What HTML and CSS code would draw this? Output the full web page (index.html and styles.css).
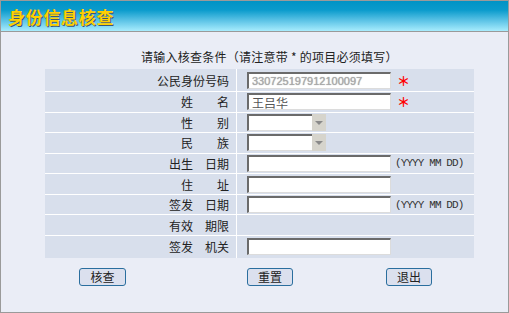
FILE: index.html
```html
<!DOCTYPE html>
<html lang="zh-CN">
<head>
<meta charset="UTF-8" />
<title>身份信息核查</title>
<link rel="stylesheet" href="styles.css">
</head>
<body>
    <div class="page">
        <div class="header">
            <h1>身份信息核查</h1>
        </div>

        <p class="notice">请输入核查条件（请注意带 * 的项目必须填写）</p>

        <form class="query-form">
            <label class="cell-label" for="id-no">公民身份号码</label>
            <div class="cell-field">
                <input type="text" id="id-no" class="txt txt-id" value="330725197912100097" />
                <span class="required">＊</span>
            </div>

            <label class="cell-label" for="name">姓　　名</label>
            <div class="cell-field">
                <input type="text" id="name" class="txt txt-name" value="王吕华" />
                <span class="required">＊</span>
            </div>

            <label class="cell-label" for="sex">性　　别</label>
            <div class="cell-field">
                <span class="select-wrap"><select id="sex"><option></option></select></span>
            </div>

            <label class="cell-label" for="nation">民　　族</label>
            <div class="cell-field">
                <span class="select-wrap"><select id="nation"><option></option></select></span>
            </div>

            <label class="cell-label" for="birth">出生　日期</label>
            <div class="cell-field">
                <input type="text" id="birth" class="txt" />
                <span class="hint">(YYYY MM DD)</span>
            </div>

            <label class="cell-label" for="addr">住　　址</label>
            <div class="cell-field">
                <input type="text" id="addr" class="txt" />
            </div>

            <label class="cell-label" for="issue-date">签发　日期</label>
            <div class="cell-field">
                <input type="text" id="issue-date" class="txt" />
                <span class="hint">(YYYY MM DD)</span>
            </div>

            <label class="cell-label">有效　期限</label>
            <div class="cell-field"></div>

            <label class="cell-label" for="office">签发　机关</label>
            <div class="cell-field">
                <input type="text" id="office" class="txt" />
            </div>
        </form>

        <div class="actions">
            <button type="button" class="btn btn-check">核查</button>
            <button type="button" class="btn btn-reset">重置</button>
            <button type="button" class="btn btn-exit">退出</button>
        </div>
    </div>
</body>
</html>
```

FILE: styles.css
```css
body {
    margin: 0;
    font-family: "Noto Sans CJK SC", "Liberation Sans", sans-serif;
    font-size: 12px;
    color: #222;
}

.page {
    width: 509px;
    height: 313px;
    box-sizing: border-box;
    border: 1px solid #9a9a9a;
    background: #eaedf6;
}

.header {
    height: 30px;
    border-bottom: 1px solid #9a9a9a;
    background: linear-gradient(#0093c5 0%, #0a9bcc 30%, #5cc3e6 65%, #a8ecfd 100%);
    display: flex;
    align-items: center;
    padding-left: 7px;
}

.header h1 {
    margin: 0;
    font-size: 17px;
    font-weight: bold;
    color: #ffd000;
    text-shadow: 1px 1px 0 #3b5876;
    letter-spacing: 0.7px;
}

.notice {
    margin: 0;
    height: 37px;
    line-height: 14px;
    padding-top: 18px;
    box-sizing: border-box;
    padding-left: 140px;
    color: #222;
    white-space: nowrap;
    letter-spacing: 0.25px;
}

.query-form {
    margin: 0 0 0 44px;
    width: 429px;
    display: grid;
    grid-template-columns: 191px 237px;
    grid-template-rows: 22px repeat(7, 19.57px) 22px;
    gap: 1px;
    background: #fff;
}

.cell-label,
.cell-field {
    background: #d8dfec;
    display: flex;
    align-items: center;
}

.cell-label {
    justify-content: flex-end;
    padding-right: 7px;
    color: #222;
    white-space: pre;
}

.cell-field {
    padding-left: 10px;
}

.txt {
    width: 144px;
    height: 17px;
    box-sizing: border-box;
    margin: 0;
    padding: 0 3px;
    border-style: solid;
    border-width: 2px 1px 1px 2px;
    border-color: #6b6b6b #dcdcdc #dcdcdc #6b6b6b;
    background: #fff;
    font-family: "Noto Sans CJK SC", "Liberation Sans", sans-serif;
    font-size: 12px;
    outline: none;
}

.txt-id {
    font-family: "Liberation Sans", sans-serif;
    font-size: 11px;
    color: #a9a9a9;
    text-shadow: 0 0 1px #999;
}

.txt-name {
    color: #555;
}

.required {
    color: #ff0000;
    font-size: 13px;
    font-weight: bold;
    margin-left: 6px;
    line-height: 1;
}

.hint {
    font-family: "Liberation Mono", monospace;
    font-size: 11px;
    letter-spacing: -0.9px;
    color: #333;
    margin-left: 4px;
}

.select-wrap {
    position: relative;
    display: inline-block;
    width: 79px;
    height: 17px;
}

.select-wrap select {
    appearance: none;
    -webkit-appearance: none;
    width: 79px;
    height: 17px;
    box-sizing: border-box;
    margin: 0;
    border-style: solid;
    border-width: 2px 1px 1px 2px;
    border-color: #6b6b6b #dcdcdc #dcdcdc #6b6b6b;
    background: #fff;
    border-radius: 0;
}

/* 下拉按钮 */
.select-wrap::after {
    content: "";
    position: absolute;
    right: 0;
    top: 0;
    width: 14px;
    height: 17px;
    background: #d6d4cc;
}

.select-wrap::before {
    content: "";
    position: absolute;
    right: 3px;
    top: 7px;
    border-left: 4px solid transparent;
    border-right: 4px solid transparent;
    border-top: 4px solid #8a8a8a;
    z-index: 1;
}

.actions {
    display: flex;
    padding-top: 10px;
}

.btn {
    height: 18px;
    box-sizing: border-box;
    padding: 0;
    border: 1px solid #2a6e9e;
    border-radius: 3px;
    background: #dbe0ee;
    font-family: "Noto Sans CJK SC", "Liberation Sans", sans-serif;
    font-size: 12px;
    line-height: 16px;
    color: #222;
    cursor: pointer;
}

.btn-check {
    width: 47px;
    margin-left: 78px;
}

.btn-reset {
    width: 46px;
    margin-left: 121px;
}

.btn-exit {
    width: 46px;
    margin-left: 93px;
}
```
